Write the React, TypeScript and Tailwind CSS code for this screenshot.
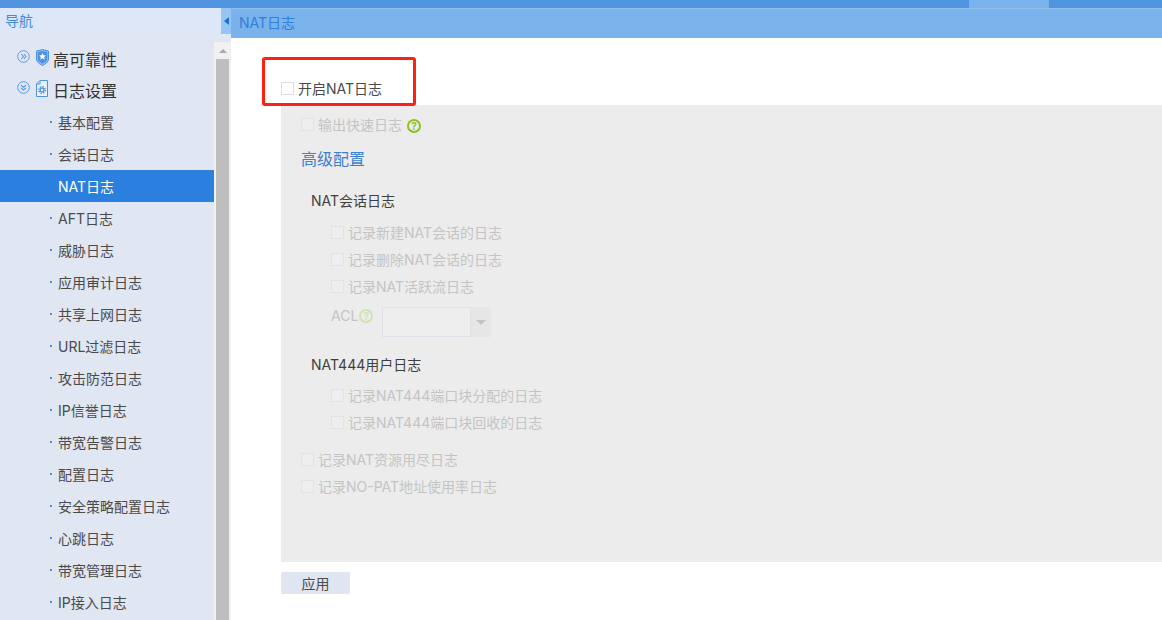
import { ReactNode } from "react";

const font = "font-['Inter','Noto_Sans_CJK_SC',sans-serif]";

const navItems = [
  "基本配置",
  "会话日志",
  "NAT日志",
  "AFT日志",
  "威胁日志",
  "应用审计日志",
  "共享上网日志",
  "URL过滤日志",
  "攻击防范日志",
  "IP信誉日志",
  "带宽告警日志",
  "配置日志",
  "安全策略配置日志",
  "心跳日志",
  "带宽管理日志",
  "IP接入日志",
];

function Circle({ open }: { open?: boolean }) {
  return (
    <svg width="13" height="13" viewBox="0 0 13 13" fill="none" stroke="#5a9ae6" className="shrink-0">
      <circle cx="6.5" cy="6.5" r="5.8" />
      {open ? (
        <path d="M4 4.2l2.5 2 2.5-2M4 7l2.5 2L9 7" strokeWidth="1.1" />
      ) : (
        <path d="M4.4 4l2 2.5-2 2.5M7 4l2 2.5L7 9" strokeWidth="1.1" />
      )}
    </svg>
  );
}

function ShieldIcon() {
  return (
    <svg width="13" height="17" viewBox="0 0 13 17" className="shrink-0">
      <path d="M6.5 0.5L12.5 2v8c0 3-3 5-6 6.5C3.500 15 .5 13 .5 10V2z" fill="#8fbdf0" stroke="#4f93e0" />
      <path d="M1.800 3l4.700-1.100L11.200 3v6.500c0 2.300-2.300 4-4.700 5.300C4.100 13.500 1.800 11.800 1.800 9.500z" fill="#4f93e0" />
      <path d="M6.500 4l1 2.300 2.400.2-1.800 1.600.6 2.400-2.200-1.300-2.200 1.300.6-2.400L3.100 6.500l2.400-.2z" fill="#fff" />
    </svg>
  );
}

function FileGearIcon() {
  return (
    <svg width="12" height="17" viewBox="0 0 12 17" className="shrink-0">
      <path d="M4 .5h7.500v16H.5V4z" fill="#e8f0fb" stroke="#4f93e0" />
      <path d="M4 .5V4H.5" fill="none" stroke="#4f93e0" />
      <circle cx="6" cy="10" r="3.200" fill="none" stroke="#4f93e0" strokeWidth="1.400" strokeDasharray="1.500 1" />
      <circle cx="6" cy="10" r="1.800" fill="none" stroke="#4f93e0" strokeWidth="1.200" />
    </svg>
  );
}

function Help({ faded }: { faded?: boolean }) {
  return (
    <span
      className={`ml-[5px] flex h-[14px] w-[14px] shrink-0 items-center justify-center rounded-full border-2 text-[10px] leading-none font-bold ${
        faded ? "border-[#cfe4ae] text-[#cfe4ae]" : "border-[#8cc21f] text-[#8cc21f]"
      }`}
    >
      ?
    </span>
  );
}

function Check({ label, className = "" }: { label: string; className?: string }) {
  return (
    <label className={`flex h-[27px] items-center text-[14px] text-[#c4c4c4] ${className}`}>
      <span className="mr-[4px] h-[13px] w-[13px] border border-[#e3e3e3] bg-[#eeeeee]" />
      {label}
    </label>
  );
}

function Heading({ children }: { children: ReactNode }) {
  return <div className="flex h-[27px] items-center pl-[30px] text-[14px] text-[#3f3f3f]">{children}</div>;
}

export default function App() {
  return (
    <div className={`${font} relative flex h-[620px] w-[1162px] flex-col overflow-hidden bg-white`}>
      <div className="flex h-[8px] shrink-0 bg-[#5194e0]">
        <div className="ml-[969px] w-[80px] bg-[#7ab2eb]" />
      </div>
      <div className="flex min-h-0 flex-1">
        <aside className="flex w-[231px] shrink-0 flex-col bg-[#e0e6f2]">
          <div className="flex h-[26px] shrink-0 bg-[#dde7f7]">
            <div className="flex-1 pl-[5px] text-[14px] leading-[25px] text-[#3c8be0]">导航</div>
            <div className="flex w-[10px] items-center justify-center bg-[#95c5f3]">
              <span className="h-0 w-0 border-y-[4px] border-r-[5px] border-y-transparent border-r-[#1f6fd0]" />
            </div>
          </div>
          <div className="flex min-h-0 flex-1">
            <nav className="w-[214px] shrink-0 pt-[10px]">
              {[
                { label: "高可靠性", open: false, icon: <ShieldIcon /> },
                { label: "日志设置", open: true, icon: <FileGearIcon /> },
              ].map((g) => (
                <div key={g.label} className="flex h-[31px] items-center pl-[17px] text-[16px] text-[#333333]">
                  <span className="mb-[7px] mr-[6px]">
                    <Circle open={g.open} />
                  </span>
                  <span className="mb-[4px] mr-[5px] flex w-[12px] justify-center">{g.icon}</span>
                  {g.label}
                </div>
              ))}
              {navItems.map((item) => {
                const active = item === "NAT日志";
                return (
                  <div
                    key={item}
                    className={`flex h-[32px] items-center pl-[50px] text-[14px] ${
                      active ? "bg-[#2b7fdf] text-white" : "text-[#4a4a4a]"
                    }`}
                  >
                    <span className={`mr-[6px] h-[2px] w-[2px] ${active ? "bg-[#2b7fdf]" : "bg-[#4f93e0]"}`} />
                    {item}
                  </div>
                );
              })}
            </nav>
            <div className="mt-[8px] flex w-[17px] shrink-0 flex-col items-center bg-[#f1f1f1]">
              <div className="flex h-[17px] w-full shrink-0 items-center justify-center">
                <span className="h-0 w-0 border-x-[4px] border-b-[4px] border-x-transparent border-b-[#a9a9a9]" />
              </div>
              <div className="w-[13px] flex-1 bg-[#bebebe]" />
            </div>
          </div>
        </aside>
        <main className="min-w-0 flex-1">
          <div className="h-[30px] border-t border-[#8fbfee] bg-[#7ab2eb] pl-[8px] text-[14px] leading-[28px] text-[#2f7fdc]">
            NAT日志
          </div>
          <div className="pl-[50px] pt-[37px]">
            <label className="flex h-[30px] items-center pb-[4px] text-[14px] text-[#4a4a4a]">
              <span className="mr-[4px] h-[13px] w-[13px] border border-[#dcdcdc] bg-white" />
              开启NAT日志
            </label>
            <section className="h-[457px] bg-[#ececec] pl-[20px] pt-[6px]">
              <div className="flex h-[27px] items-center text-[14px] text-[#c4c4c4]">
                <span className="mr-[4px] h-[13px] w-[13px] border border-[#e3e3e3] bg-[#eeeeee]" />
                输出快速日志
                <span className="mt-[3px]">
                  <Help />
                </span>
              </div>
              <div className="mt-[8px] h-[27px] text-[16px] leading-[27px] text-[#3b7fd0]">高级配置</div>
              <div className="-ml-[20px] mt-[14px]">
                <Heading>NAT会话日志</Heading>
                <div className="pl-[50px] pt-[5px]">
                  <Check label="记录新建NAT会话的日志" />
                  <Check label="记录删除NAT会话的日志" />
                  <Check label="记录NAT活跃流日志" />
                  <div className="mt-[7px] flex h-[30px] items-center text-[14px] text-[#c4c4c4]">
                    <span className="mb-[14px]">ACL</span>
                    <span className="mb-[12px] -ml-[4px]">
                      <Help faded />
                    </span>
                    <div className="ml-[9px] flex h-[30px] w-[109px]">
                      <div className="flex-1 border border-[#e0e0e8] bg-[#eeeeee]" />
                      <div className="flex w-[20px] items-center justify-center bg-[#e6e6e6]">
                        <span className="h-0 w-0 border-x-[5px] border-t-[5px] border-x-transparent border-t-[#c4c4c4]" />
                      </div>
                    </div>
                  </div>
                </div>
                <div className="mt-[14px]">
                  <Heading>NAT444用户日志</Heading>
                </div>
                <div className="pl-[50px] pt-[4px]">
                  <Check label="记录NAT444端口块分配的日志" />
                  <Check label="记录NAT444端口块回收的日志" />
                </div>
                <div className="pl-[20px] pt-[10px]">
                  <Check label="记录NAT资源用尽日志" />
                  <Check label="记录NO-PAT地址使用率日志" />
                </div>
              </div>
            </section>
            <button className="mt-[10px] h-[22px] w-[69px] rounded-[2px] bg-[#dfe5f1] text-[14px] text-[#4a4a4a]">
              应用
            </button>
          </div>
        </main>
      </div>
      <div className="absolute left-[262px] top-[57px] h-[49px] w-[154px] rounded-[3px] border-[3px] border-[#ff2015]" />
    </div>
  );
}
